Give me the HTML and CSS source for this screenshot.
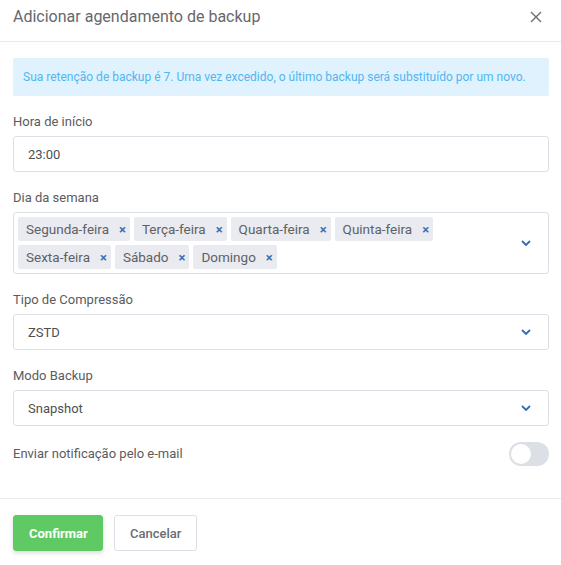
FILE: index.html
```html
<!DOCTYPE html>
<html lang="pt">
<head>
<meta charset="utf-8">
<link rel="stylesheet" href="styles.css">
</head>
<body>
<div class="dialog">
  <div class="header">
    <span class="title">Adicionar agendamento de backup</span>
    <svg class="close" width="12" height="12" viewBox="0 0 12 12"><path d="M1 1L11 11M11 1L1 11" stroke="#6b6d72" stroke-width="1.4" fill="none"/></svg>
  </div>
  <div class="body">
    <div class="alert">Sua retenção de backup é 7. Uma vez excedido, o último backup será substituído por um novo.</div>
    <div class="item">
      <div class="label">Hora de início</div>
      <div class="input">23:00</div>
    </div>
    <div class="item">
      <div class="label">Dia da semana</div>
      <div class="multi">
        <div class="tags">
          <span class="tag">Segunda-feira<i class="x">×</i></span>
          <span class="tag">Terça-feira<i class="x">×</i></span>
          <span class="tag">Quarta-feira<i class="x">×</i></span>
          <span class="tag">Quinta-feira<i class="x">×</i></span>
          <span class="tag">Sexta-feira<i class="x">×</i></span>
          <span class="tag">Sábado<i class="x">×</i></span>
          <span class="tag">Domingo<i class="x">×</i></span>
        </div>
        <svg class="chev" width="10" height="6" viewBox="0 0 10 6"><path d="M1 1L5 5L9 1" stroke="#2f6db5" stroke-width="1.8" fill="none"/></svg>
      </div>
    </div>
    <div class="item">
      <div class="label">Tipo de Compressão</div>
      <div class="input select"><span>ZSTD</span><svg class="chev" width="10" height="6" viewBox="0 0 10 6"><path d="M1 1L5 5L9 1" stroke="#2f6db5" stroke-width="1.8" fill="none"/></svg></div>
    </div>
    <div class="item">
      <div class="label">Modo Backup</div>
      <div class="input select"><span>Snapshot</span><svg class="chev" width="10" height="6" viewBox="0 0 10 6"><path d="M1 1L5 5L9 1" stroke="#2f6db5" stroke-width="1.8" fill="none"/></svg></div>
    </div>
    <div class="row">
      <span class="label">Enviar notificação pelo e-mail</span>
      <span class="switch"><span class="knob"></span></span>
    </div>
  </div>
  <div class="footer">
    <button class="btn primary">Confirmar</button>
    <button class="btn">Cancelar</button>
  </div>
</div>
</body>
</html>
```
FILE: styles.css
```css
* { box-sizing: border-box; }
html, body { margin: 0; padding: 0; background: #fff; }
body { font-family: Roboto, "Liberation Sans", sans-serif; color: #606266; }
.dialog { width: 561px; height: 565px; display: flex; flex-direction: column; }
.header {
  height: 42px; border-bottom: 1px solid #e8e9ec;
  display: flex; align-items: center; justify-content: space-between;
  padding: 0 19px 0 13px;
}
.title { font-size: 16px; color: #66686c; position: relative; top: -4px; }
.close { position: relative; top: -4px; }
.body { padding: 16px 12px 0 13px; display: flex; flex-direction: column; }
.alert {
  height: 38px; background: #dff2fd; border-radius: 2px;
  color: #52b6f2; font-size: 12px; display: flex; align-items: center;
  padding: 0 10px; margin-bottom: 16px;
}
.item { display: flex; flex-direction: column; margin-bottom: 16px; }
.label { font-size: 13px; color: #5a5c60; line-height: 20px; margin-bottom: 4px; }
.input {
  height: 36px; border: 1px solid #dcdfe6; border-radius: 3px;
  display: flex; align-items: center; padding: 0 14px; font-size: 13px; color: #4d4f53;
}
.select { justify-content: space-between; padding-right: 17px; }
.multi {
  height: 62px; border: 1px solid #dcdfe6; border-radius: 3px;
  display: flex; align-items: center; justify-content: space-between;
  padding: 4px 17px 4px 4px;
}
.tags { display: flex; flex-wrap: wrap; gap: 4px; width: 440px; }
.tag {
  height: 24px; background: #e9ebf0; color: #5f6166; font-size: 13.5px;
  display: inline-flex; align-items: center; padding: 0 4px 0 8px; border-radius: 2px;
}
.x { font-style: normal; color: #3b6fb6; font-size: 13px; font-weight: 700; margin-left: 10px; line-height: 1; }
.row { display: flex; justify-content: space-between; align-items: center; height: 24px; }
.row .label { margin: 0; }
.switch { width: 40px; height: 24px; border-radius: 12px; background: #dcdfe6; position: relative; }
.knob { position: absolute; left: 2px; top: 2px; width: 20px; height: 20px; border-radius: 50%; background: #fff; }
.footer {
  margin-top: auto; border-top: 1px solid #e8e9ec; height: 67px;
  padding: 16px 13px 0; display: flex; gap: 11px; align-items: flex-start;
}
.btn {
  height: 36px; border: 1px solid #dcdfe6; background: #fff; border-radius: 3px;
  font-family: Roboto, "Liberation Sans", sans-serif; font-size: 13px; color: #6b6d72;
  padding: 0 15px; font-weight: 500;
}
.primary {
  background: #5fca63; border-color: #5fca63; color: #fff; font-weight: 700;
  width: 90px; box-shadow: 0 2px 4px rgba(0,0,0,0.15);
}
.btn:not(.primary) { width: 83px; }
```
